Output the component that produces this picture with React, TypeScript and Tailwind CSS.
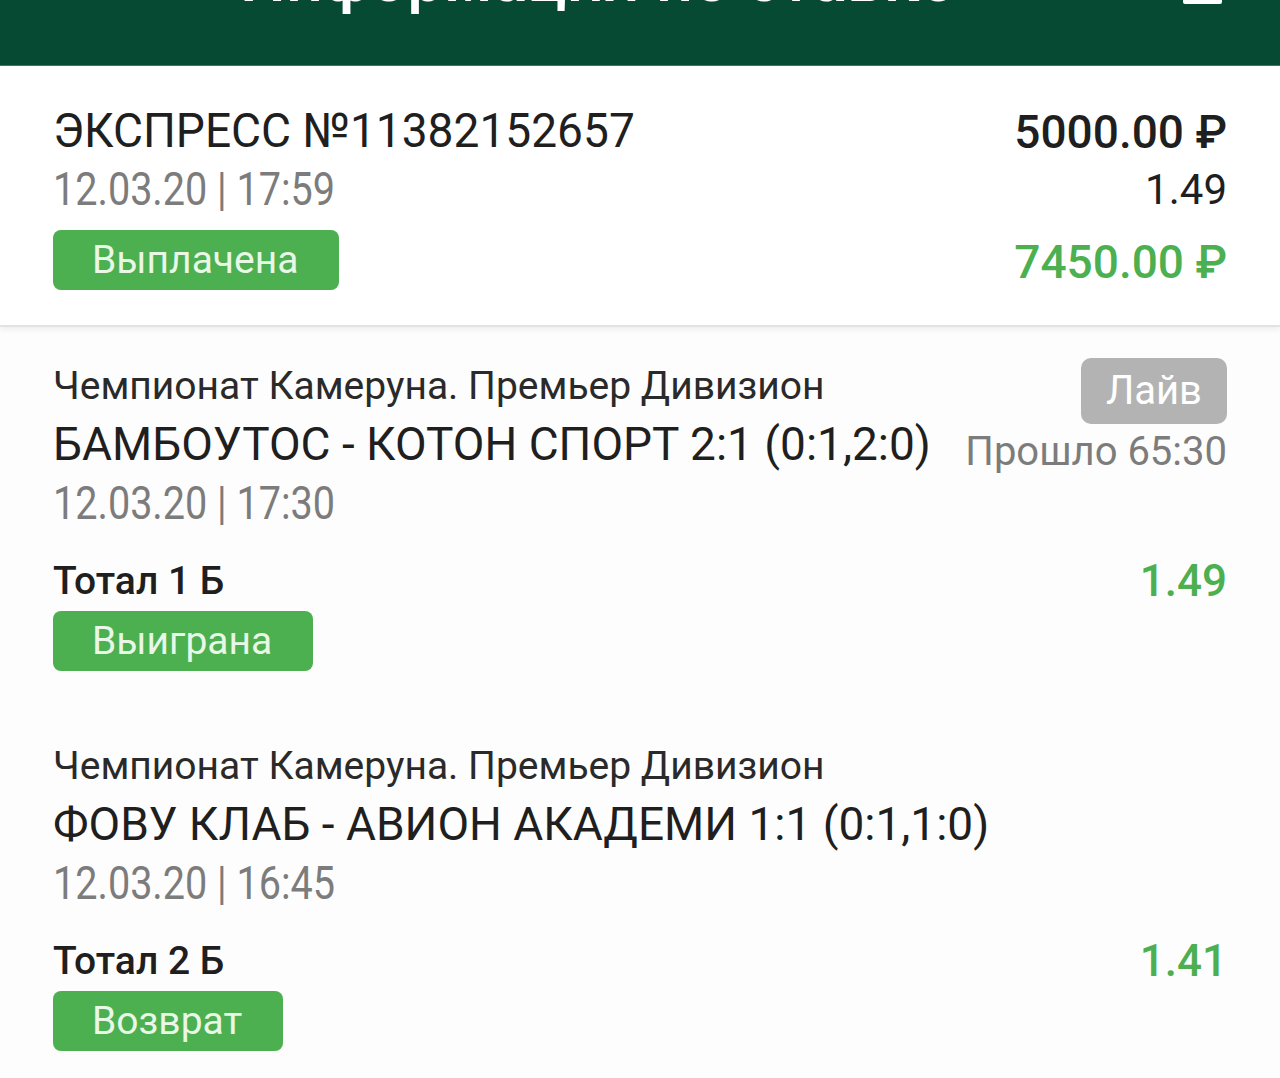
import React from "react"

type Leg = {
  league: string
  match: string
  date: string
  market: string
  odd: string
  status: string
  live?: string
}

const legs: Leg[] = [
  {
    league: "Чемпионат Камеруна. Премьер Дивизион",
    match: "БАМБОУТОС - КОТОН СПОРТ 2:1 (0:1,2:0)",
    date: "12.03.20 | 17:30",
    market: "Тотал 1 Б",
    odd: "1.49",
    status: "Выиграна",
    live: "Прошло 65:30",
  },
  {
    league: "Чемпионат Камеруна. Премьер Дивизион",
    match: "ФОВУ КЛАБ - АВИОН АКАДЕМИ 1:1 (0:1,1:0)",
    date: "12.03.20 | 16:45",
    market: "Тотал 2 Б",
    odd: "1.41",
    status: "Возврат",
  },
]

// dates are drawn in a narrower face in the app
const DateText = ({ children }: { children: React.ReactNode }) => (
  <div className="text-[46px] leading-none text-[#7c7c7c]">
    <span className="inline-block origin-left scale-x-[0.86] whitespace-nowrap">{children}</span>
  </div>
)

const Badge = ({ children }: { children: React.ReactNode }) => (
  <div className="inline-flex h-[60px] items-center rounded-[8px] bg-[#4caf50] pl-[39px] pr-[41px] text-[39px] leading-none text-[#e8f7e6]">
    {children}
  </div>
)

const LegRow = ({ leg }: { leg: Leg }) => (
  <div className="pb-[76px]">
    <div className="flex justify-between">
      <div>
        <div className="text-[39px] leading-none text-[#2a2a2a]">{leg.league}</div>
        <div className="mt-[15px] text-[46px] leading-none text-[#1f1f1f]">{leg.match}</div>
        <div className="mt-[13px]">
          <DateText>{leg.date}</DateText>
        </div>
      </div>
      {leg.live && (
        <div className="-mt-[9px] flex flex-col items-end">
          <div className="flex h-[66px] items-center rounded-[10px] bg-[#b3b3b3] px-[25px] text-[40px] leading-none text-white">
            Лайв
          </div>
          <div className="mt-[8px] text-[40px] leading-none text-[#7c7c7c]">{leg.live}</div>
        </div>
      )}
    </div>
    <div className="mt-[33px] flex items-center justify-between">
      <div className="text-[39px] font-medium leading-none text-[#1f1f1f]">{leg.market}</div>
      <div className="text-[44px] font-medium leading-none text-[#4caf50]">{leg.odd}</div>
    </div>
    <div className="mt-[8px]">
      <Badge>{leg.status}</Badge>
    </div>
  </div>
)

export default function App() {
  return (
    <div className="min-h-[1078px] bg-white font-['Roboto','Liberation_Sans',sans-serif]">
      <header className="flex h-[66px] overflow-hidden border-b border-[#3d7563] bg-[#064a33]">
        <div className="ml-[240px] -mt-[53px] whitespace-nowrap text-[65px] font-medium leading-none text-white">
          Информация по ставке
        </div>
        <div className="ml-auto mr-[58px] h-[4px] w-[39px] rounded-b-[2px] bg-white" />
      </header>

      <section className="relative z-10 flex justify-between border-b-2 border-[#e3e3e3] px-[53px] pb-[35px] pt-[41px] shadow-[0_3px_5px_rgba(0,0,0,0.06)]">
        <div>
          <div className="text-[48px] leading-none text-[#1f1f1f]">
            <span className="inline-block origin-left scale-x-[0.96] whitespace-nowrap">ЭКСПРЕСС №11382152657</span>
          </div>
          <div className="mt-[11px]">
            <DateText>12.03.20 | 17:59</DateText>
          </div>
          <div className="mt-[18px]">
            <Badge>Выплачена</Badge>
          </div>
        </div>
        <div className="flex flex-col items-end pt-[2px]">
          <div className="text-[46px] font-medium leading-none text-[#1f1f1f]">5000.00 ₽</div>
          <div className="mt-[14px] text-[42px] leading-none text-[#1f1f1f]">1.49</div>
          <div className="mt-[28px] text-[46px] font-medium leading-none text-[#4caf50]">7450.00 ₽</div>
        </div>
      </section>

      <main className="bg-[#fdfdfd] px-[53px] pt-[40px]">
        {legs.map((leg, i) => (
          <LegRow key={i} leg={leg} />
        ))}
      </main>
    </div>
  )
}
